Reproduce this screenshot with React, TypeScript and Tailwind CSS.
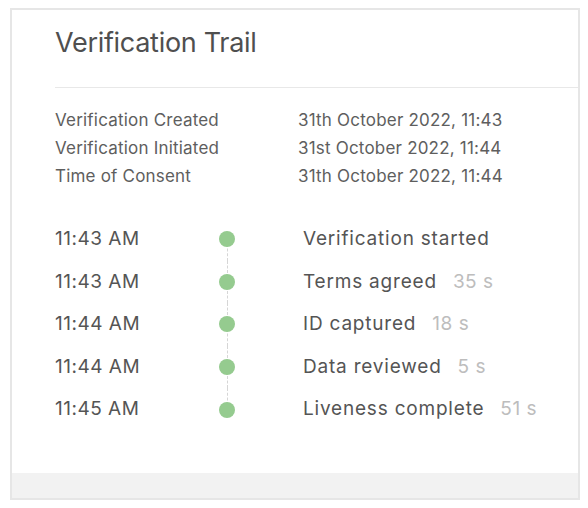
const info = [
  { label: "Verification Created", value: "31th October 2022, 11:43" },
  { label: "Verification Initiated", value: "31st October 2022, 11:44" },
  { label: "Time of Consent", value: "31th October 2022, 11:44" },
];

const steps = [
  { time: "11:43 AM", title: "Verification started", took: "" },
  { time: "11:43 AM", title: "Terms agreed", took: "35 s" },
  { time: "11:44 AM", title: "ID captured", took: "18 s" },
  { time: "11:44 AM", title: "Data reviewed", took: "5 s" },
  { time: "11:45 AM", title: "Liveness complete", took: "51 s" },
];

export default function App() {
  return (
    <div className="w-[588px] h-[508px] bg-white pt-2 pl-[10px] font-['Inter',sans-serif]">
      <div className="w-[570px] h-[492px] border-2 border-[#e6e6e6] flex flex-col">
        <div className="flex-1 pl-[43px]">
          <h2 className="text-[27px] leading-none text-[#4f4f4f] tracking-[-0.3px] pt-[19px] h-[77px]">
            Verification Trail
          </h2>
          <div className="border-t border-[#e8e8e8]" />

          <div className="pt-[19px] flex flex-col">
            {info.map((row) => (
              <div key={row.label} className="flex h-[28px] items-center text-[17px] text-[#5e5e5e] tracking-[0.2px]">
                <span className="w-[243px]">{row.label}</span>
                <span>{row.value}</span>
              </div>
            ))}
          </div>

          <div className="pt-[27px] flex flex-col">
            {steps.map((s, i) => (
              <div key={i} className="flex h-[42.6px] items-center text-[19px] text-[#555] tracking-[0.5px]">
                <span className="w-[164px]">{s.time}</span>
                <div className="relative w-[16px] h-full flex items-center justify-center">
                  {i > 0 && (
                    <span className="absolute left-1/2 top-0 h-1/2 border-l border-dashed border-[#d6d6d6]" />
                  )}
                  {i < steps.length - 1 && (
                    <span className="absolute left-1/2 bottom-0 h-1/2 border-l border-dashed border-[#d6d6d6]" />
                  )}
                  <span className="relative w-[16px] h-[16px] rounded-full bg-[#95cb8f]" />
                </div>
                <span className="pl-[68px] tracking-[0.8px]">{s.title}</span>
                {s.took && <span className="pl-[16px] text-[#bdbdbd]">{s.took}</span>}
              </div>
            ))}
          </div>
        </div>
        <div className="h-[25px] bg-[#f2f2f2]" />
      </div>
    </div>
  );
}
